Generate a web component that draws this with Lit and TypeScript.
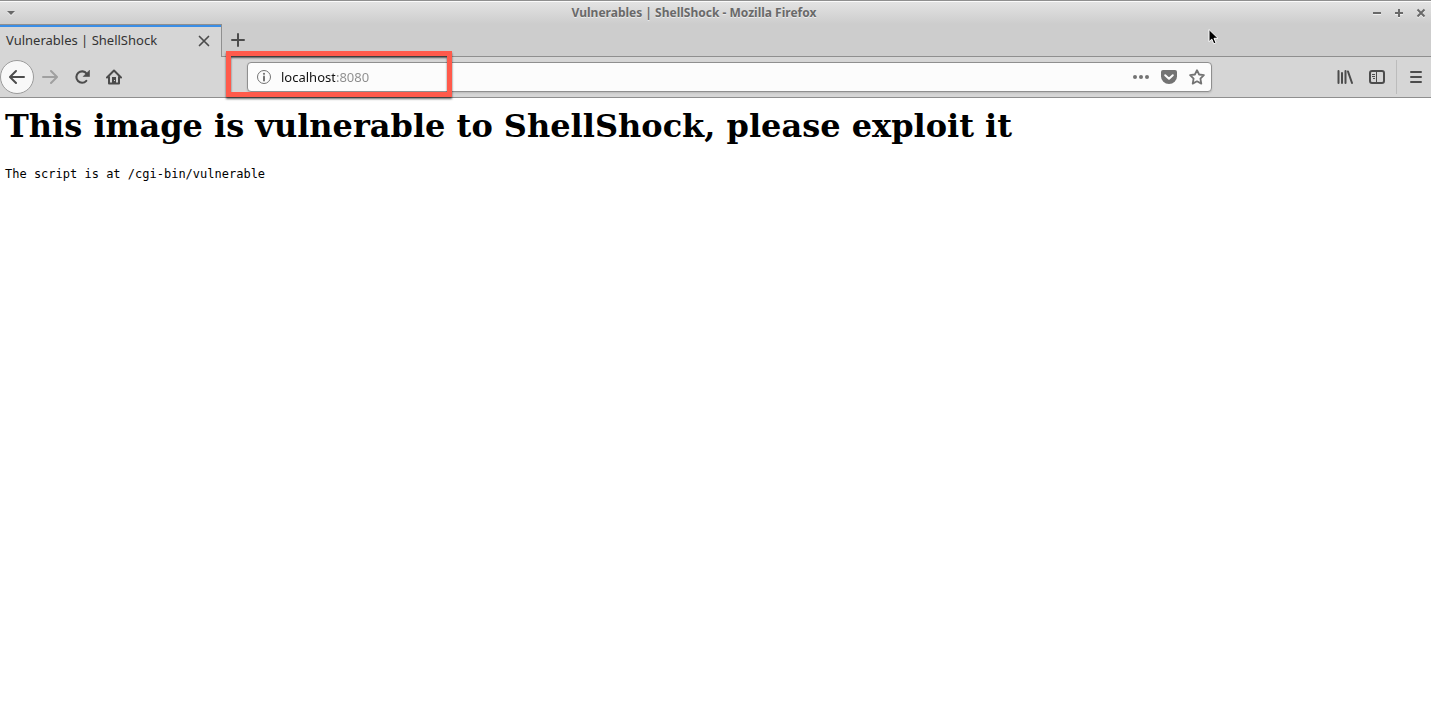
import { LitElement, html, css } from "lit";
import { customElement, property } from "lit/decorators.js";

@customElement("window-title-bar")
class WindowTitleBar extends LitElement {
  @property() title = "";

  static styles = css`
    :host {
      display: block;
    }
    .bar {
      display: flex;
      align-items: center;
      gap: 2px;
      box-sizing: border-box;
      height: 24px;
      padding: 1px 0 0 1px;
      border-top: 1px solid #8f8f8f;
      box-shadow: inset 0 1px #fbfbfb;
      background: linear-gradient(#e4e4e4, #cdcdcd);
    }
    .title {
      flex: 1;
      text-align: center;
      font: bold 12px/22px "Noto Sans", sans-serif;
      color: #696969;
      text-shadow: 0 1px #ececec;
      white-space: nowrap;
      overflow: hidden;
    }
    button {
      display: grid;
      place-items: center;
      width: 20px;
      height: 22px;
      padding: 0;
      border: 0;
      background: none;
      color: #696969;
    }
    svg {
      display: block;
      filter: drop-shadow(0 1px 0 #f0f0f0);
    }
  `;

  render() {
    return html`
      <div class="bar">
        <button aria-label="Window menu">
          <svg width="10" height="10" viewBox="0 0 10 10"><path d="M1 3h8L5 7z" fill="currentColor" /></svg>
        </button>
        <div class="title">${this.title}</div>
        <button aria-label="Minimize">
          <svg width="10" height="10" viewBox="0 0 10 10"><path d="M1 4h8v2H1z" fill="currentColor" /></svg>
        </button>
        <button aria-label="Maximize">
          <svg width="10" height="10" viewBox="0 0 10 10"><path d="M1 4h3V1h2v3h3v2H6v3H4V6H1z" fill="currentColor" /></svg>
        </button>
        <button aria-label="Close window">
          <svg width="10" height="10" viewBox="0 0 10 10"><path d="M1.5 1.5l7 7M8.500 1.500l-7 7" stroke="currentColor" stroke-width="2" /></svg>
        </button>
      </div>
    `;
  }
}

@customElement("tab-strip")
class TabStrip extends LitElement {
  @property() label = "";

  static styles = css`
    :host {
      display: block;
    }
    .strip {
      display: flex;
      height: 33px;
      background: #cdcdcd;
      box-shadow: inset 0 -1px #8f8f8f;
    }
    .tab {
      display: flex;
      align-items: center;
      box-sizing: border-box;
      width: 222px;
      padding: 0 8px 0 6px;
      border-top: 1px solid #8f8f8f;
      border-right: 1px solid #8f8f8f;
      background: #d6d6d6;
      box-shadow: inset 0 2px #3a8ee6;
      color: #333;
    }
    .label {
      flex: 1;
      font: 13px/18px "Noto Sans", sans-serif;
      padding-bottom: 2px;
      white-space: nowrap;
    }
    button {
      display: grid;
      place-items: center;
      padding: 0;
      border: 0;
      background: none;
      color: #4c4c4c;
    }
    .close {
      width: 18px;
      height: 20px;
    }
    .add {
      width: 32px;
      height: 32px;
    }
    svg {
      display: block;
    }
  `;

  render() {
    return html`
      <div class="strip">
        <div class="tab">
          <span class="label">${this.label}</span>
          <button class="close" aria-label="Close tab">
            <svg width="12" height="12" viewBox="0 0 12 12">
              <path d="M1.500 1.500l9 9M10.500 1.500l-9 9" stroke="currentColor" stroke-width="1.700" stroke-linecap="round" />
            </svg>
          </button>
        </div>
        <button class="add" aria-label="New tab">
          <svg width="14" height="14" viewBox="0 0 14 14">
            <path d="M7 1v12M1 7h12" stroke="currentColor" stroke-width="2" stroke-linecap="round" />
          </svg>
        </button>
      </div>
    `;
  }
}

@customElement("nav-toolbar")
class NavToolbar extends LitElement {
  @property() address = "";

  static styles = css`
    :host {
      display: block;
    }
    .toolbar {
      display: flex;
      align-items: center;
      box-sizing: border-box;
      height: 41px;
      border-bottom: 1px solid #8f8f8f;
      background: #d6d6d6;
    }
    button {
      display: grid;
      place-items: center;
      flex: none;
      box-sizing: border-box;
      width: 32px;
      height: 32px;
      padding: 0;
      border: 0;
      background: none;
      color: #4c4c4c;
    }
    .back {
      width: 34px;
      height: 34px;
      border: 1px solid #9b9b9b;
      border-radius: 50%;
      background: #f8f8f8;
    }
    .forward {
      color: #a0a0a0;
    }
    .spring {
      flex: none;
      width: 117px;
    }
    .location {
      position: relative;
      display: flex;
      align-items: center;
      flex: 1;
      min-width: 0;
      box-sizing: border-box;
      height: 30px;
      padding: 0 0 0 8px;
      border: 1px solid #8f8f8f;
      border-radius: 4px;
      background: #fcfcfc;
      box-shadow: 0 1px 2px #0002;
      color: #737373;
    }
    .location button {
      width: 28px;
      height: 28px;
      color: #737373;
    }
    .location .info {
      width: 16px;
    }
    .address {
      flex: 1;
      min-width: 0;
      height: 20px;
      margin-left: 9px;
      padding: 0;
      border: 0;
      outline: 0;
      font: 13px/20px "Noto Sans", sans-serif;
      color: transparent;
      background: linear-gradient(90deg, #111 54px, #8c8c8c 54px);
      -webkit-background-clip: text;
      background-clip: text;
    }
    .highlight {
      position: absolute;
      inset: -12px auto -6px -22px;
      box-sizing: border-box;
      width: 226px;
      border: 5px solid #ff5a4b;
      box-shadow: 0 2px 2px #0009, inset 0 2px 2px #0009;
      pointer-events: none;
    }
    .separator {
      flex: none;
      width: 1px;
      height: 34px;
      margin: 0 4px 0 3px;
      background: #bcbcbc;
    }
    .menu {
      width: 30px;
    }
    svg {
      display: block;
    }
  `;

  render() {
    return html`
      <div class="toolbar">
        <button class="back" aria-label="Back">
          <svg width="16" height="16" viewBox="0 0 16 16">
            <path fill="currentColor" d="M15 7H3.414l4.293-4.293a1 1 0 0 0-1.414-1.414l-6 6a1 1 0 0 0 0 1.414l6 6a1 1 0 0 0 1.414-1.414L3.414 9H15a1 1 0 0 0 0-2z" />
          </svg>
        </button>
        <button class="forward" aria-label="Forward">
          <svg width="16" height="16" viewBox="0 0 16 16">
            <path fill="currentColor" d="M1 7h11.586L8.293 2.707a1 1 0 0 1 1.414-1.414l6 6a1 1 0 0 1 0 1.414l-6 6a1 1 0 0 1-1.414-1.414L12.586 9H1a1 1 0 0 1 0-2z" />
          </svg>
        </button>
        <button aria-label="Reload">
          <svg width="16" height="16" viewBox="0 0 16 16">
            <path d="M12.300 11.900A5.700 5.700 0 1 1 12.600 4.600" fill="none" stroke="currentColor" stroke-width="2.100" stroke-linecap="round" />
            <path d="M15.500 1.200v6.300H9.200z" fill="currentColor" stroke="currentColor" stroke-width=".6" stroke-linejoin="round" />
          </svg>
        </button>
        <button aria-label="Home">
          <svg width="16" height="16" viewBox="0 0 16 16">
            <path d="M1 8.500L8 1.500l7 7M3 7.500V14.500h10V7.500" fill="none" stroke="currentColor" stroke-width="2" stroke-linecap="round" stroke-linejoin="round" />
            <path d="M6 8h4v6H6z" fill="currentColor" />
            <path d="M8 11h1v1H8z" fill="#d6d6d6" />
          </svg>
        </button>
        <div class="spring"></div>
        <div class="location">
          <button class="info" aria-label="Site information">
            <svg width="16" height="16" viewBox="0 0 16 16">
              <circle cx="8" cy="8" r="6.500" fill="none" stroke="currentColor" />
              <circle cx="8" cy="4.800" r="1.100" fill="currentColor" />
              <path d="M8 7.500v4" stroke="currentColor" stroke-width="2" stroke-linecap="round" />
            </svg>
          </button>
          <input class="address" type="text" aria-label="Address" spellcheck="false" .value=${this.address} />
          <button aria-label="Page actions">
            <svg width="16" height="16" viewBox="0 0 16 16" fill="currentColor">
              <circle cx="2" cy="8" r="2" /><circle cx="8" cy="8" r="2" /><circle cx="14" cy="8" r="2" />
            </svg>
          </button>
          <button aria-label="Save to Pocket">
            <svg width="16" height="16" viewBox="0 0 16 16">
              <path fill="currentColor" d="M2 1h12a2 2 0 0 1 2 2v4.500a8 7.500 0 0 1-16 0V3a2 2 0 0 1 2-2z" />
              <path d="M4.200 6.200L8 9.800l3.800-3.600" fill="none" stroke="#fcfcfc" stroke-width="2" stroke-linecap="round" stroke-linejoin="round" />
            </svg>
          </button>
          <button aria-label="Bookmark this page">
            <svg width="16" height="16" viewBox="0 0 16 16">
              <path d="M8 1.200l2.100 4.300 4.800.7-3.500 3.400.9 5L8 12.300l-4.300 2.300.9-5L1.100 6.200l4.800-.7z" fill="none" stroke="currentColor" stroke-width="1.800" stroke-linejoin="round" />
            </svg>
          </button>
          <div class="highlight"></div>
        </div>
        <div class="spring"></div>
        <button aria-label="Library">
          <svg width="16" height="16" viewBox="0 0 16 16">
            <path d="M1.500 2v12M5 4v10M8.500 2v12M11 2.500l4 11.500" stroke="currentColor" stroke-width="2" stroke-linecap="round" />
          </svg>
        </button>
        <button aria-label="Sidebars">
          <svg width="16" height="16" viewBox="0 0 16 16">
            <rect x="1" y="2" width="14" height="12" rx="2" fill="none" stroke="currentColor" stroke-width="2" />
            <path d="M7.500 2v12" stroke="currentColor" />
            <path d="M3 5.500h3M3 7.500h3M4 9.500h2" stroke="currentColor" />
          </svg>
        </button>
        <div class="separator"></div>
        <button class="menu" aria-label="Open menu">
          <svg width="16" height="16" viewBox="0 0 16 16">
            <path d="M3 3h10M3 8h10M3 13h10" stroke="currentColor" stroke-width="2" stroke-linecap="round" />
          </svg>
        </button>
      </div>
    `;
  }
}

@customElement("app-root")
class AppRoot extends LitElement {
  static styles = css`
    :host {
      display: block;
      position: relative;
      min-height: 100vh;
      background: #fff;
    }
    main {
      padding: 9px 5px;
      color: #000;
    }
    h1 {
      margin: 0;
      font: bold 32px/38px "DejaVu Serif", serif;
    }
    pre {
      margin: 22px 0 0;
      font: 12px/14px "DejaVu Sans Mono", monospace;
    }
    .pointer {
      position: absolute;
      top: 28px;
      right: 211px;
      pointer-events: none;
    }
  `;

  render() {
    return html`
      <window-title-bar .title=${"Vulnerables | ShellShock - Mozilla Firefox"}></window-title-bar>
      <tab-strip .label=${"Vulnerables | ShellShock"}></tab-strip>
      <nav-toolbar .address=${"localhost:8080"}></nav-toolbar>
      <main>
        <h1>This image is vulnerable to ShellShock, please exploit it</h1>
        <pre>The script is at /cgi-bin/vulnerable</pre>
      </main>
      <svg class="pointer" width="12" height="18" viewBox="0 0 12 18" aria-hidden="true">
        <path d="M1 1.500v12.200l2.800-2.600 2 4.800 2.200-1-2-4.600h4z" fill="#000" stroke="#fff" />
      </svg>
    `;
  }
}
